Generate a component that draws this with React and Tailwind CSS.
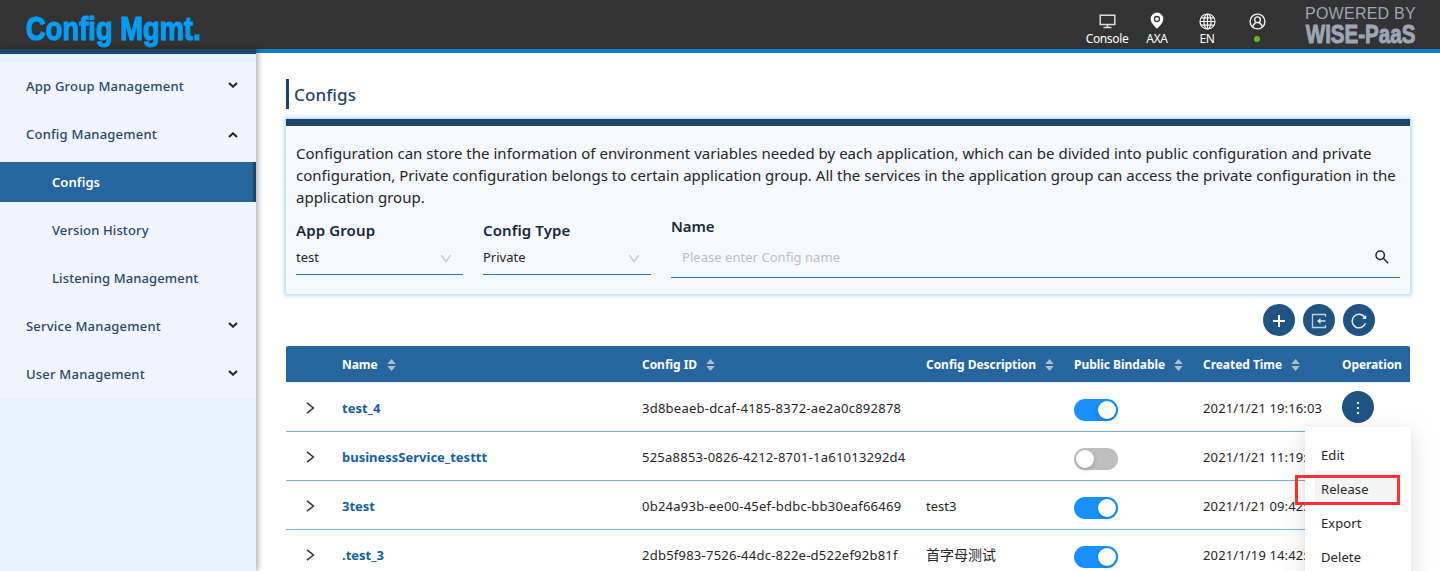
const MENU = [
  { label: "App Group Management", arrow: "down" },
  { label: "Config Management", arrow: "up" },
  { label: "Configs", child: true, active: true },
  { label: "Version History", child: true },
  { label: "Listening Management", child: true },
  { label: "Service Management", arrow: "down" },
  { label: "User Management", arrow: "down" },
];

const ROWS = [
  { name: "test_4", id: "3d8beaeb-dcaf-4185-8372-ae2a0c892878", desc: "", on: true, time: "2021/1/21 19:16:03" },
  { name: "businessService_testtt", id: "525a8853-0826-4212-8701-1a61013292d4", desc: "", on: false, time: "2021/1/21 11:19:25" },
  { name: "3test", id: "0b24a93b-ee00-45ef-bdbc-bb30eaf66469", desc: "test3", on: true, time: "2021/1/21 09:42:37" },
  { name: ".test_3", id: "2db5f983-7526-44dc-822e-d522ef92b81f", desc: "首字母测试", on: true, time: "2021/1/19 14:42:10" },
];

const COLUMNS = ["Name", "Config ID", "Config Description", "Public Bindable", "Created Time"];
const GRID = "grid grid-cols-[56px_300px_284px_148px_129px_139px_68px]";

function MenuArrow({ up }) {
  return (
    <svg width="10" height="6" viewBox="0 0 10 6" className={up ? "mt-px" : "-mt-[2px]"} fill="none" stroke="#1c2228" strokeWidth="2">
      <path d={up ? "M1 5 L5 1.3 L9 5" : "M1 1 L5 4.7 L9 1"} />
    </svg>
  );
}

function Sidebar() {
  return (
    <aside className="relative z-10 w-64 shrink-0 border-t-[5px] border-[#1b456b] bg-[#e8f0fa] pt-2 shadow-[2px_0_6px_rgba(0,0,0,0.35)]">
      <nav className="flex flex-col gap-2 bg-[#f0f5fd] py-1">
        {MENU.map((m) => (
          <div
            key={m.label}
            className={
              "flex h-10 items-center justify-between text-[13px] " +
              (m.child ? "pl-[52px] " : "pl-[26px] pr-[18px] ") +
              (m.active
                ? "border-r-[3px] border-[#1b456b] bg-[#25669f] font-semibold tracking-[0.06px] text-white"
                : m.child
                  ? "font-medium tracking-[0.12px] text-[#24486c]"
                  : "font-medium tracking-[0.22px] text-[#24486c]")
            }
          >
            <span className="pt-[2px]">{m.label}</span>
            {m.arrow && <MenuArrow up={m.arrow === "up"} />}
          </div>
        ))}
      </nav>
    </aside>
  );
}

function HeaderItem({ label, children }) {
  return (
    <div className="flex w-[50px] flex-col items-center text-white">
      <div className="flex h-[17px] w-[17px] items-center justify-center">{children}</div>
      <div className="mt-[3px] flex h-[14px] items-center whitespace-nowrap text-[12px] leading-[14px] tracking-[-0.35px]">{label}</div>
    </div>
  );
}

function Header() {
  return (
    <header className="flex h-[49px] shrink-0 justify-between bg-[#333333] pl-[26px] pr-[23px]">
      <div className="origin-left scale-x-[0.805] pt-[8px] font-['Liberation_Sans'] text-[34px] font-bold leading-[40px] text-[#009ef7] [-webkit-text-stroke:1.200px_#009ef7]">
        Config Mgmt.
      </div>
      <div className="flex">
        <div className="flex pt-3">
          <HeaderItem label="Console">
            <svg width="17" height="15" viewBox="0 0 17 15" className="mt-px" fill="none" stroke="#dcdcdc" strokeWidth="1.500">
              <path d="M1.200 1.300h14.600v9.200H1.200zM8.500 11v2.500M4.500 13.500h8" />
            </svg>
          </HeaderItem>
          <HeaderItem label="AXA">
            <svg width="14" height="17" viewBox="0 0 14 17">
              <path d="M7 .6a6.300 6.300 0 0 0-6.300 6.300C.7 11.400 7 16.600 7 16.600s6.300-5.200 6.300-9.700A6.300 6.300 0 0 0 7 .6z" fill="#fff" />
              <circle cx="7" cy="7" r="2.500" fill="#fff" stroke="#333" strokeWidth="1.300" />
            </svg>
          </HeaderItem>
          <HeaderItem label="EN">
            <svg width="17" height="17" viewBox="0 0 17 17" className="mt-px" fill="none" stroke="#f2f2f2" strokeWidth="1.200">
              <circle cx="8.500" cy="8.500" r="7.500" />
              <ellipse cx="8.500" cy="8.500" rx="3.600" ry="7.500" />
              <path d="M8.500 1v15M1 8.500h15M2.100 4.800h12.800M2.100 12.200h12.800" />
            </svg>
          </HeaderItem>
          <HeaderItem label={<span className="-mt-px h-[6px] w-[6px] rounded-full bg-[#52c41a]" />}>
            <svg width="17" height="17" viewBox="0 0 17 17" className="mt-px" fill="none" stroke="#f2f2f2" strokeWidth="1.400">
              <circle cx="8.500" cy="8.500" r="7.400" />
              <circle cx="8.500" cy="6.800" r="2.900" />
              <path d="M3.600 13.800c.5-2 1.700-3.300 3.200-4.200M13.400 13.800c-.5-2-1.700-3.300-3.200-4.200" />
            </svg>
          </HeaderItem>
        </div>
        <div className="ml-[22px] w-[113px] pl-px font-['Liberation_Sans'] text-[#9fa5b5]">
          <div className="mt-[5px] h-[18px] whitespace-nowrap text-[16px] leading-[17px] tracking-[0.25px]">POWERED BY</div>
          <div className="origin-left scale-x-[0.775] whitespace-nowrap pl-px text-[26.500px] font-bold leading-[23px] [-webkit-text-stroke:1px_#9fa5b5]">WISE-PaaS</div>
        </div>
      </div>
    </header>
  );
}

function Select({ label, value, className }) {
  return (
    <div className={className}>
      <div className="text-[15px] font-semibold leading-[22px] tracking-[0.12px] text-[#17293b]">{label}</div>
      <div className="flex h-[34px] items-center justify-between border-b border-[#2f7dc0] pr-[11px] text-[13px]">
        <span>{value}</span>
        <svg width="12" height="9" viewBox="0 0 12 9" className="mt-[2px]" fill="none" stroke="#bfc3c8" strokeWidth="1.200">
          <path d="M1.200 1 L6 7.500 L10.800 1" />
        </svg>
      </div>
    </div>
  );
}

function FilterPanel() {
  return (
    <section className="mt-[10px] h-[175px] border-t-[7px] border-[#1b456b] bg-[#f5f8fd] px-[10px] pt-4 shadow-[0_0_4px_2px_#bcd9f2]">
      <p className="text-[15px] leading-[22px] tracking-[0.018px]">
        Configuration can store the information of environment variables needed by each application, which can be divided into public configuration and private
        <br />
        configuration, Private configuration belongs to certain application group. All the services in the application group can access the private configuration in the
        <br />
        application group.
      </p>
      <div className="flex pt-[11px]">
        <Select label="App Group" value="test" className="w-[167px]" />
        <Select label="Config Type" value="Private" className="ml-[20px] w-[168px]" />
        <div className="-mt-[4px] ml-5 flex-1">
          <div className="text-[15px] font-semibold leading-[22px] tracking-[-0.1px] text-[#17293b]">Name</div>
          <div className="flex h-[41px] items-center justify-between border-b border-[#2f7dc0] pl-[11px] pr-[11px] text-[13px] text-[#bfbfbf]">
            <span className="pt-px tracking-[0.04px]">Please enter Config name</span>
            <svg width="14" height="14" viewBox="0 0 14 14" fill="none" stroke="#222" strokeWidth="1.500">
              <circle cx="5.200" cy="5.200" r="4.200" />
              <path d="M8.300 8.300 L13.200 13.200" />
            </svg>
          </div>
        </div>
      </div>
    </section>
  );
}

function RoundButton({ children }) {
  return <button className="flex h-8 w-8 items-center justify-center rounded-full bg-[#1f5382]">{children}</button>;
}

function Toolbar() {
  return (
    <div className="mt-[10px] flex gap-2 pl-[977px]">
      <RoundButton>
        <svg width="12" height="12" viewBox="0 0 12 12" className="mt-[2px]" fill="none" stroke="#fff" strokeWidth="2">
          <path d="M6 0v12M0 6h12" />
        </svg>
      </RoundButton>
      <RoundButton>
        <svg width="16" height="16" viewBox="0 0 16 16" className="mt-[2px]" fill="none" stroke="#c3d1df" strokeWidth="1.300">
          <path d="M14.500 3.800V1.500H1.500v13h13V12" />
          <path d="M14.500 8H8.500" strokeWidth="1.700" />
          <path d="M6 8 L9.500 5 V11z" fill="#dfe7ef" stroke="none" />
        </svg>
      </RoundButton>
      <RoundButton>
        <svg width="16" height="16" viewBox="0 0 16 16" className="mt-[2px]" fill="none" stroke="#e6edf4" strokeWidth="1.500">
          <path d="M13.800 4.500A6.800 6.800 0 1 0 14.400 10.300" />
          <path d="M15.200 2v4h-4z" fill="#e6edf4" stroke="none" />
        </svg>
      </RoundButton>
    </div>
  );
}

function Sorter() {
  return (
    <svg width="9" height="12" viewBox="0 0 9 12" className="mt-px" fill="#b5bcc4">
      <path d="M4.500 0 L8.700 5 H.3zM4.500 12 L8.700 7 H.3z" />
    </svg>
  );
}

function Toggle({ on }) {
  return (
    <span
      className={
        "flex h-[22px] w-11 items-center rounded-full p-[2px] " +
        (on ? "justify-end bg-[#1890ff]" : "justify-start bg-[#bfbfbf]")
      }
    >
      <span className="h-[18px] w-[18px] rounded-full bg-white shadow-[0_2px_4px_rgba(0,35,11,0.2)]" />
    </span>
  );
}

function ActionMenu() {
  return (
    <div className="absolute left-[-37px] top-[36px] z-20 w-[106px] rounded-[2px] bg-white px-[10px] pb-3 pt-[10px] shadow-[0_9px_28px_8px_rgba(0,0,0,0.05),0_6px_16px_rgba(0,0,0,0.08),0_3px_6px_-4px_rgba(0,0,0,0.12)]">
      {["Edit", "Release", "Export", "Delete"].map((t) => (
        <div
          key={t}
          className={"flex h-[34px] w-[86px] items-center pl-[6px] pt-[4px] text-[13px] tracking-[0.09px] " + (t === "Release" ? "bg-[#f4f4f4]" : "")}
        >
          {t}
        </div>
      ))}
      <div className="absolute left-[-10px] top-[48px] h-[30px] w-[105px] border-[3px] border-[#fa3034]" />
    </div>
  );
}

function Table() {
  return (
    <section className="mt-[10px]">
      <div className={GRID + " h-9 items-center rounded-t-[2px] bg-[#25669f] text-[12px] font-bold text-white"}>
        <span />
        {COLUMNS.map((c) => (
          <div key={c} className="flex items-center gap-[9px] whitespace-nowrap pt-px tracking-[-0.04px]">
            {c}
            <Sorter />
          </div>
        ))}
        <span className="pt-px tracking-[-0.100px]">Operation</span>
      </div>
      <div className="h-px bg-[#f0f0f0]" />
      {ROWS.map((r, i) => (
        <div key={r.name} className={GRID + " h-[49px] items-center border-b border-[#7db0d8] text-[13px] whitespace-nowrap"}>
          <svg width="9" height="12" viewBox="0 0 9 12" className="ml-5 mt-px" fill="none" stroke="#333" strokeWidth="1.500">
            <path d="M1 .8 L7.400 6 L1 11.200" />
          </svg>
          <span className="pt-[3px] font-bold text-[#155fa3]">{r.name}</span>
          <span className="pt-[3px] tracking-[0.237px]">{r.id}</span>
          <span className={r.desc === "test3" ? "pt-[3px]" : "pt-px text-[14px]"}>{r.desc}</span>
          <div className="pt-[6px]"><Toggle on={r.on} /></div>
          <span className="pt-[3px] tracking-[0.136px]">{r.time}</span>
          <div className="relative">
            {i === 0 && (
              <>
                <RoundButton>
                  <svg width="4" height="14" viewBox="0 0 4 14" fill="#e6edf4">
                    <path d="M1 2h2v2H1zM1 7h2v2H1zM1 12h2v2H1z" />
                  </svg>
                </RoundButton>
                <ActionMenu />
              </>
            )}
          </div>
        </div>
      ))}
    </section>
  );
}

export default function App() {
  return (
    <div className="flex h-[571px] w-[1440px] flex-col overflow-hidden bg-white font-['Noto_Sans','Noto_Sans_CJK_SC',sans-serif] text-[#262626]">
      <Header />
      <div className="flex flex-1">
        <Sidebar />
        <main className="h-[522px] flex-1 border-t-4 border-[#0a82c8] pl-[30px] pr-[30px] pt-[26px]">
          <h1 className="flex h-[30px] items-center border-l-[3px] border-[#1b456b] pl-[5px] pt-[2px] text-[17px] font-medium tracking-[0.1px] text-[#24486c]">Configs</h1>
          <FilterPanel />
          <Toolbar />
          <Table />
        </main>
      </div>
    </div>
  );
}
